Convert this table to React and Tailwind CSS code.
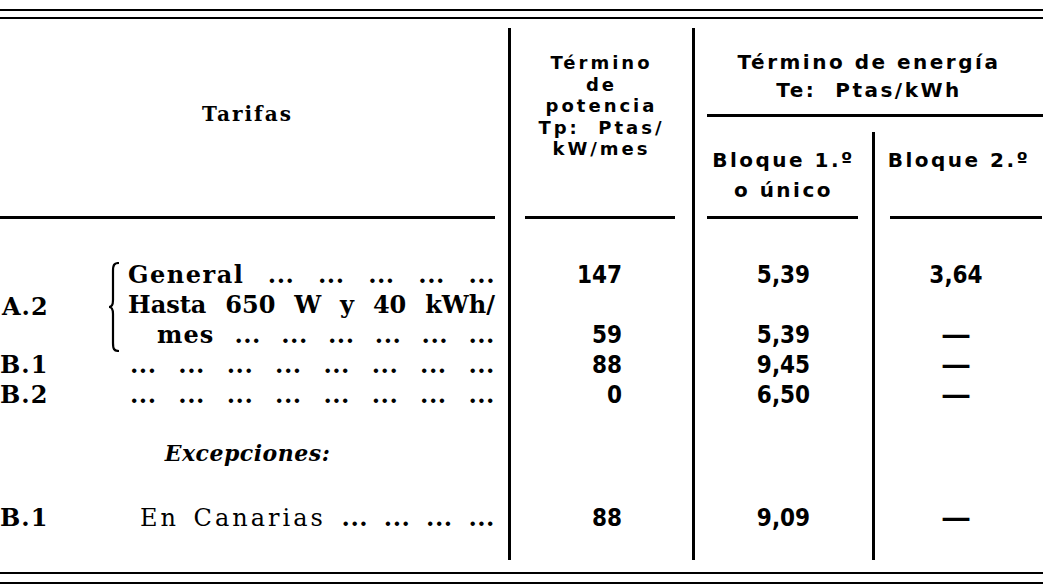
import React from 'react';

const head = "font-['DejaVu_Sans',sans-serif] font-bold text-[20px] tracking-[2.5px]";
const serif = "font-['DejaVu_Serif',serif]";
const num = "font-['DejaVu_Sans_Condensed','DejaVu_Sans',sans-serif] font-bold text-[24px] leading-none";

const Dots = ({ n }) =>
  Array.from({ length: n }, (_, i) => (
    <span key={i} className="font-bold tracking-[0.5px]">...</span>
  ));

const Dash = () => (
  <span className="inline-block scale-x-125 font-['DejaVu_Sans',sans-serif] font-bold text-[24px] leading-none">—</span>
);

// seven cells: five tariff rows, the "Excepciones" row, the Canarias row
const DataCol = ({ cells, align }) => (
  <div className={`pt-[41px] ${num}`}>
    {cells.slice(0, 5).map((c, i) => (
      <div key={i} className={`h-[30px] flex items-center ${align}`}>{c}</div>
    ))}
    <div className="h-[28px]" />
    <div className={`h-[30px] flex items-center ${align}`}>{cells[5]}</div>
    <div className="h-[35px]" />
    <div className={`h-[30px] flex items-center ${align}`}>{cells[6]}</div>
  </div>
);

const Brace = () => (
  <svg width="12" height="90" viewBox="0 0 12 90" className="ml-[2px] mt-[2px]">
    <path
      d="M11 1 C6 1 5 3 5 9 L5 38 C5 43 3 45 1 45 C3 45 5 47 5 52 L5 81 C5 87 6 89 11 89"
      fill="none"
      stroke="black"
      strokeWidth="2.2"
    />
  </svg>
);

const TarifasCol = () => (
  <div className="w-[508px] shrink-0 flex flex-col">
    <div className="h-[188px] flex items-center justify-center pr-[13px] pb-[16px]">
      <span className={`${serif} font-bold text-[20px] tracking-[2px]`}>Tarifas</span>
    </div>
    <div className="h-[3px] bg-black mr-[13px]" />

    <div className={`pt-[41px] pr-[13px] ${serif} text-[24px] leading-none`}>
      <div className="grid grid-cols-[106px_22px_1fr] grid-rows-[repeat(5,30px)] items-center">
        <div className="col-start-2 row-start-1 row-span-3 self-start">
          <Brace />
        </div>
        <div className="col-start-3 row-start-1 flex justify-between items-baseline">
          <span className="tracking-[1.5px] font-semibold">General</span>
          <Dots n={5} />
        </div>
        <div className="col-start-1 row-start-2 font-bold tracking-[1px] pl-[2px] pt-[4px]">A.2</div>
        <div className="col-start-3 row-start-2 flex justify-between font-bold">
          <span>Hasta</span>
          <span>650</span>
          <span>W</span>
          <span>y</span>
          <span>40</span>
          <span>kWh/</span>
        </div>
        <div className="col-start-3 row-start-3 flex justify-between items-baseline pl-[29px]">
          <span className="font-bold tracking-[1px]">mes</span>
          <Dots n={6} />
        </div>
        <div className="col-start-1 row-start-4 font-bold tracking-[1px]">B.1</div>
        <div className="col-start-3 row-start-4 flex justify-between pl-[2px]">
          <Dots n={8} />
        </div>
        <div className="col-start-1 row-start-5 font-bold tracking-[1px]">B.2</div>
        <div className="col-start-3 row-start-5 flex justify-between pl-[2px]">
          <Dots n={8} />
        </div>
      </div>

      <div className="h-[28px]" />
      <div className="h-[30px] flex items-center justify-center italic font-semibold text-[22px] tracking-[0.5px]">
        Excepciones:
      </div>
      <div className="h-[35px]" />
      <div className="h-[30px] flex items-center">
        <span className="w-[140px] font-bold tracking-[1px]">B.1</span>
        <div className="flex-1 flex justify-between items-baseline">
          <span className="tracking-[3px] [word-spacing:4px]">En Canarias</span>
          <Dots n={4} />
        </div>
      </div>
    </div>
  </div>
);

export default function App() {
  return (
    <div className="w-[1043px] h-[586px] bg-white text-black overflow-hidden">
      <div className="pt-[9px]">
        <div className="h-[10px] border-y-2 border-black" />
      </div>

      <div className="flex h-[553px] pt-[9px] pb-[12px]">
        <TarifasCol />

        {/* Término de potencia */}
        <div className="w-[184px] shrink-0 border-l-[3px] border-black flex flex-col">
          <div className="h-[188px] pt-[24px] text-center leading-[21.5px] font-['DejaVu_Sans',sans-serif] font-bold text-[18px] tracking-[3px]">
            <div>Término</div>
            <div>de</div>
            <div>potencia</div>
            <div>Tp:&nbsp; Ptas/</div>
            <div>kW/mes</div>
          </div>
          <div className="h-[3px] bg-black ml-[14px] mr-[17px]" />
          <DataCol
            align="justify-end pr-[70px]"
            cells={['147', '', '59', '88', '0', '', '88']}
          />
        </div>

        {/* Término de energía */}
        <div className="flex-1 border-l-[3px] border-black flex flex-col">
          <div className={`h-[86px] pt-[20px] text-center leading-[28px] ${head}`}>
            <div>Término de energía</div>
            <div>Te:&nbsp; Ptas/kWh</div>
          </div>
          <div className="h-[3px] bg-black ml-[12px]" />
          <div className="flex flex-1">
            <div className="w-[177px] shrink-0 flex flex-col">
              <div className={`h-[99px] pt-[28px] text-center leading-[30px] ${head}`}>
                <div>Bloque 1.º</div>
                <div>o único</div>
              </div>
              <div className="h-[3px] bg-black ml-[12px] mr-[14px]" />
              <DataCol
                align="justify-center"
                cells={['5,39', '', '5,39', '9,45', '6,50', '', '9,09']}
              />
            </div>
            <div className="flex-1 pt-[15px] flex flex-col">
              <div className="flex-1 border-l-[3px] border-black flex flex-col">
                <div className={`h-[84px] pt-[13px] text-center leading-[30px] ${head}`}>
                  <div>Bloque 2.º</div>
                </div>
                <div className="h-[3px] bg-black ml-[15px] mr-[1px]" />
                <DataCol
                  align="justify-center pr-[6px]"
                  cells={['3,64', '', <Dash />, <Dash />, <Dash />, '', <Dash />]}
                />
              </div>
            </div>
          </div>
        </div>
      </div>

      <div className="h-[12px] border-y-2 border-black" />
    </div>
  );
}
